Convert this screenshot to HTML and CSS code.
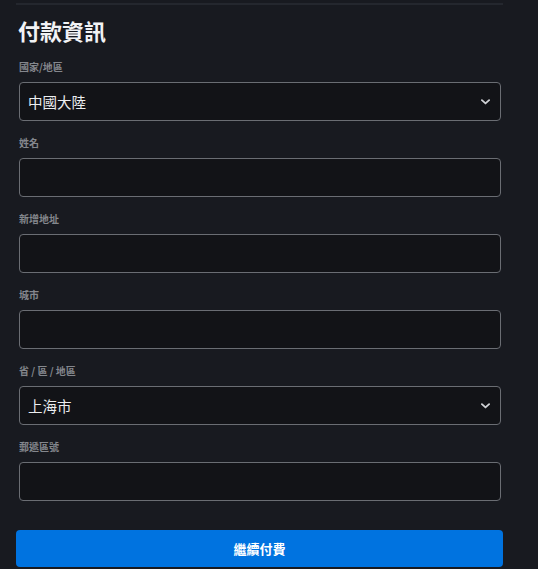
FILE: index.html
```html
<!DOCTYPE html>
<html lang="zh-Hant">
<head>
<meta charset="utf-8">
<title>付款資訊</title>
<link rel="stylesheet" href="styles.css">
</head>
<body>
<div class="page">
  <div class="divider"></div>
  <h1 class="title">付款資訊</h1>
  <form class="form">
    <div class="field">
      <label class="label">國家/地區</label>
      <div class="input select"><span class="value">中國大陸</span><svg class="chev" viewBox="0 0 10 6" width="9" height="6"><path d="M1 1 L5 4.6 L9 1" fill="none" stroke="#d0d2d6" stroke-width="2" stroke-linecap="round" stroke-linejoin="round"/></svg></div>
    </div>
    <div class="field">
      <label class="label">姓名</label>
      <div class="input"></div>
    </div>
    <div class="field">
      <label class="label">新增地址</label>
      <div class="input"></div>
    </div>
    <div class="field">
      <label class="label">城市</label>
      <div class="input"></div>
    </div>
    <div class="field">
      <label class="label">省 / 區 / 地區</label>
      <div class="input select"><span class="value">上海市</span><svg class="chev" viewBox="0 0 10 6" width="9" height="6"><path d="M1 1 L5 4.6 L9 1" fill="none" stroke="#d0d2d6" stroke-width="2" stroke-linecap="round" stroke-linejoin="round"/></svg></div>
    </div>
    <div class="field">
      <label class="label">郵遞區號</label>
      <div class="input"></div>
    </div>
    <button type="button" class="btn">繼續付費</button>
  </form>
</div>
</body>
</html>
```

FILE: styles.css
```css
html, body {
  margin: 0;
  padding: 0;
  background: #181a20;
}
body {
  font-family: "Noto Sans CJK TC", "Noto Sans", sans-serif;
  color: #e8e9eb;
}
.page {
  width: 487px;
  padding: 3px 0 0 16px;
}
.divider {
  height: 2px;
  background: #24272e;
}
.title {
  margin: 11px 0 0 2px;
  font-size: 22px;
  line-height: 28px;
  font-weight: 700;
  color: #f2f3f5;
}
.form {
  display: flex;
  flex-direction: column;
  margin-top: 16px;
}
.field {
  display: flex;
  flex-direction: column;
  padding-left: 3px;
  width: 482px;
  margin-bottom: 15px;
}
.label {
  font-size: 10px;
  line-height: 14px;
  font-weight: 700;
  color: #84878d;
  margin-bottom: 8px;
}
.input {
  box-sizing: border-box;
  height: 39px;
  border: 1px solid #6a6d73;
  border-radius: 4px;
  background: #121317;
  display: flex;
  align-items: center;
  padding: 0 10px 0 8px;
}
.value {
  flex: 1;
  font-size: 14.5px;
  color: #eceef0;
}
.chev {
  display: block;
}
.btn {
  margin-top: 14px;
  height: 37px;
  width: 487px;
  border: none;
  border-radius: 4px;
  background: #0073e0;
  color: #ffffff;
  font-family: "Noto Sans CJK TC", "Noto Sans", sans-serif;
  font-size: 13px;
  font-weight: 700;
  padding: 0;
}
```
